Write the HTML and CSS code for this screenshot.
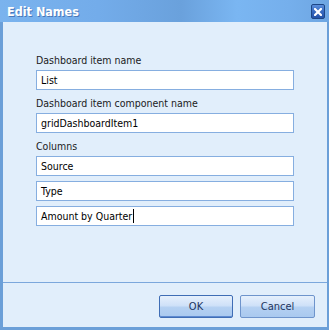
FILE: index.html
```html
<!DOCTYPE html>
<html>
<head>
<meta charset="utf-8">
<link rel="stylesheet" href="styles.css">
</head>
<body>
<div class="dialog">
  <div class="titlebar">
    <span class="title">Edit Names</span>
    <span class="close">
      <svg width="8" height="8" viewBox="0 0 8 8"><path d="M1 1 L7 7 M7 1 L1 7" stroke="#fff" stroke-width="2.2" stroke-linecap="square"/></svg>
    </span>
  </div>
  <div class="content">
    <div class="field">
      <div class="label">Dashboard item name</div>
      <div class="input">List</div>
    </div>
    <div class="field">
      <div class="label">Dashboard item component name</div>
      <div class="input">gridDashboardItem1</div>
    </div>
    <div class="field">
      <div class="label">Columns</div>
      <div class="columns">
        <div class="input">Source</div>
        <div class="input">Type</div>
        <div class="input">Amount by Quarter<span class="caret"></span></div>
      </div>
    </div>
  </div>
  <div class="footer">
    <div class="btn btn-default">OK</div>
    <div class="btn">Cancel</div>
  </div>
</div>
</body>
</html>
```

FILE: styles.css
```css
html, body {
  margin: 0;
  padding: 0;
  background: #e1eefb;
}
.dialog {
  width: 329px;
  height: 330px;
  box-sizing: border-box;
  border-left: 3px solid #6b9fd8;
  border-right: 2px solid #6b9fd8;
  border-bottom: 3px solid #6b9fd8;
  background: #e1eefb;
  display: flex;
  flex-direction: column;
  font-family: "DejaVu Sans Condensed", "Liberation Sans", Arial, sans-serif;
  font-size: 10.5px;
  color: #1b1b1b;
}
.titlebar {
  height: 22px;
  flex: none;
  margin-left: -3px;
  margin-right: -2px;
  background: linear-gradient(to right, #7ab3ee 0%, #73acea 30%, #6aa1dc 55%, #7ab6f2 72%, #75afec 88%, #6ea6e2 100%);
  display: flex;
  align-items: center;
  justify-content: space-between;
  padding: 0 4px 0 7px;
  box-sizing: border-box;
}
.title {
  color: #ffffff;
  font-weight: bold;
  font-size: 12.5px;
  text-shadow: 1px 1px 0 #4a78b8;
  line-height: 16px;
  margin-top: 1px;
}
.close {
  width: 14px;
  height: 15px;
  box-sizing: border-box;
  border: 1px solid #1d4585;
  border-radius: 2px;
  background: linear-gradient(to bottom, #5b8edb 0%, #3769c0 50%, #2352a8 100%);
  display: flex;
  align-items: center;
  justify-content: center;
  margin-top: 1px;
}
.content {
  flex: 1;
  padding: 31px 33px 0 33px;
  display: flex;
  flex-direction: column;
  gap: 6px;
}
.field {
  display: flex;
  flex-direction: column;
  gap: 3px;
}
.label {
  line-height: 14px;
  height: 14px;
}
.columns {
  display: flex;
  flex-direction: column;
  gap: 5px;
}
.input {
  height: 20px;
  box-sizing: border-box;
  border: 1px solid #86aee0;
  background: #ffffff;
  padding: 0 4px;
  line-height: 18px;
  color: #000;
  white-space: nowrap;
}
.caret {
  display: inline-block;
  width: 1px;
  height: 14px;
  background: #000;
  vertical-align: -3px;
  margin-left: 1px;
}
.footer {
  height: 45px;
  flex: none;
  box-sizing: border-box;
  border-top: 1px solid #7ba7dc;
  display: flex;
  justify-content: flex-end;
  align-items: flex-start;
  gap: 7px;
  padding: 12px 12px 0 0;
}
.btn {
  width: 75px;
  height: 23px;
  box-sizing: border-box;
  border: 1px solid #6e94cc;
  border-radius: 2px;
  background: linear-gradient(to bottom, #e6f0fc 0%, #cfe1f8 45%, #b4d0f2 55%, #a9c9ef 100%);
  color: #1e3560;
  text-align: center;
  line-height: 21px;
  font-size: 11px;
}
.btn-default {
  width: 74px;
  border-color: #3f6db5;
  box-shadow: inset 0 -1px 0 #5e8ad0;
}
```
